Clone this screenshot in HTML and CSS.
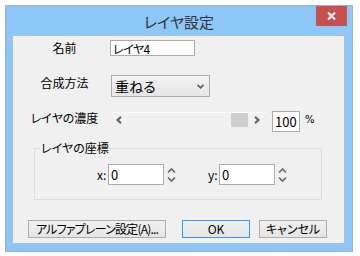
FILE: index.html
```html
<!DOCTYPE html>
<html lang="ja">
  <head>
    <meta charset="utf-8" />
    <title>レイヤ設定</title>
    <link rel="stylesheet" href="styles.css">
  </head>

  <body>
    <div class="window">
      <div class="titlebar">
        <span class="title">レイヤ設定</span>
        <button class="close_btn" title="閉じる">
          <svg width="9" height="8" viewBox="0 0 9 8"><path d="M1 0.5 L8 7.5 M8 0.5 L1 7.5" stroke="#fff" stroke-width="2"/></svg>
        </button>
      </div>

      <div class="client">
        <div class="row row_name">
          <span class="label">名前</span>
          <input class="textbox name_box" type="text" value="レイヤ4">
        </div>

        <div class="row row_blend">
          <span class="label">合成方法</span>
          <div class="combo">
            <span class="combo_text">重ねる</span>
            <svg class="combo_arrow" width="7" height="5" viewBox="0 0 7 5"><path d="M0.5 0.8 L3.5 3.8 L6.5 0.8" fill="none" stroke="#5a5a5a" stroke-width="1.6"/></svg>
          </div>
        </div>

        <div class="row row_opacity">
          <span class="label">レイヤの濃度</span>
          <div class="scroll">
            <svg class="scroll_arrow" width="6" height="8" viewBox="0 0 6 8"><path d="M5 0.8 L1.5 4 L5 7.2" fill="none" stroke="#606060" stroke-width="2"/></svg>
            <div class="scroll_track">
              <div class="scroll_thumb"></div>
            </div>
            <svg class="scroll_arrow" width="6" height="8" viewBox="0 0 6 8"><path d="M1 0.8 L4.5 4 L1 7.2" fill="none" stroke="#606060" stroke-width="2"/></svg>
          </div>
          <input class="textbox percent_box" type="text" value="100">
          <span class="percent">%</span>
        </div>

        <fieldset class="group">
          <legend>レイヤの座標</legend>
          <div class="coords">
            <span class="coord_label">x:</span>
            <input class="textbox coord_box" type="text" value="0">
            <svg class="spin" width="9" height="18" viewBox="0 0 9 18"><path d="M1 6.5 L4.5 3 L8 6.5 M1 11.5 L4.5 15 L8 11.5" fill="none" stroke="#6a6a6a" stroke-width="1.7"/></svg>

            <span class="coord_label coord_y">y:</span>
            <input class="textbox coord_box" type="text" value="0">
            <svg class="spin" width="9" height="18" viewBox="0 0 9 18"><path d="M1 6.5 L4.5 3 L8 6.5 M1 11.5 L4.5 15 L8 11.5" fill="none" stroke="#6a6a6a" stroke-width="1.7"/></svg>
          </div>
        </fieldset>

        <div class="btn_bar">
          <button class="btn alpha_btn">アルファプレーン設定(A)...</button>
          <button class="btn ok_btn">OK</button>
          <button class="btn cancel_btn">キャンセル</button>
        </div>
      </div>
    </div>
  </body>
</html>
```

FILE: styles.css
```css
html, body
{
  margin: 0;
  padding: 0;
  background-color: #fff;
  font-family: "Noto Sans CJK JP", sans-serif;
  font-size: 12px;
  font-feature-settings: "palt";
  color: #000;
}
.window
{
  margin: 5px 0 0 5px;
  width: 348px;
  height: 247px;
  box-sizing: border-box;
  border: 1px solid #9db3c8;
  background-color: #8dc7f8;
  display: flex;
  flex-direction: column;
}
.titlebar
{
  position: relative;
  height: 29px;
  display: flex;
  align-items: center;
  justify-content: center;
}
.title
{
  font-size: 15px;
  color: #333;
  line-height: 1;
  margin-top: 1px;
}
.close_btn
{
  position: absolute;
  top: 0;
  right: 5px;
  width: 31px;
  height: 20px;
  padding: 0;
  border: 0;
  background-color: #c75050;
  display: flex;
  align-items: center;
  justify-content: center;
}
.client
{
  margin: 0 7px 7px 6px;
  flex: 1;
  background-color: #f0f0f0;
  border: 1px solid #a9c0d6;
  display: flex;
  flex-direction: column;
}
.row
{
  display: flex;
  align-items: center;
}
.label
{
  width: 97px;
  padding-left: 6px;
  box-sizing: border-box;
  text-align: center;
  line-height: 1;
}
.textbox
{
  box-sizing: border-box;
  margin: 0;
  padding: 0 2px;
  border: 1px solid #ababab;
  background-color: #fff;
  font-family: inherit;
  font-feature-settings: "palt";
  color: #000;
  outline: none;
}
.row_name
{
  margin-top: 4px;
  height: 16px;
}
.name_box
{
  width: 85px;
  height: 16px;
  font-size: 12px;
  letter-spacing: -0.5px;
}
.row_blend
{
  margin-top: 19px;
  height: 22px;
}
.row_blend .label
{
  margin-top: -6px;
}
.combo
{
  margin-left: 1px;
  width: 99px;
  height: 22px;
  box-sizing: border-box;
  border: 1px solid #acacac;
  background: linear-gradient(#f2f2f2, #e5e5e5);
  display: flex;
  align-items: center;
  padding: 0 5px 0 3px;
}
.combo_text
{
  flex: 1;
  font-size: 14px;
  line-height: 1;
}
.row_opacity
{
  margin-top: 14px;
  height: 21px;
}
.row_opacity .label
{
  margin-top: -8px;
}
.scroll
{
  margin-left: 1px;
  width: 155px;
  height: 16px;
  margin-top: -4px;
  box-sizing: border-box;
  border-top: 1px solid #fff;
  display: flex;
  align-items: center;
  padding: 0 6px 0 5px;
}
.scroll_track
{
  flex: 1;
  height: 14px;
  display: flex;
  justify-content: flex-end;
  padding-right: 6px;
}
.scroll_thumb
{
  width: 17px;
  height: 14px;
  background-color: #cdcdcd;
}
.percent_box
{
  margin-left: 6px;
  width: 28px;
  height: 21px;
  font-size: 13px;
  padding: 0 0 0 2px;
}
.percent
{
  margin-left: 5px;
  margin-top: -4px;
  font-size: 10px;
  font-family: "DejaVu Sans", sans-serif;
}
.group
{
  margin: 8px 0 0 21px;
  padding: 0;
  width: 288px;
  box-sizing: border-box;
  border: 1px solid #dadada;
  min-width: 0;
}
.group legend
{
  margin-left: 5px;
  padding: 0 1px;
  line-height: 16px;
  font-size: 12px;
}
.coords
{
  display: flex;
  align-items: center;
  padding: 8px 0 14px 62px;
}
.coord_label
{
  width: 11px;
  line-height: 1;
}
.coord_y
{
  margin-left: 32px;
}
.coord_box
{
  width: 56px;
  height: 21px;
  font-size: 13px;
}
.spin
{
  margin-left: 3px;
}
.btn_bar
{
  margin: 20px 0 0 15px;
  display: flex;
}
.btn
{
  height: 18px;
  box-sizing: border-box;
  padding: 0;
  border: 1px solid #acacac;
  background: linear-gradient(#f0f0f0, #e5e5e5);
  font-family: inherit;
  font-size: 12px;
  font-feature-settings: "palt";
  line-height: 1;
  color: #000;
}
.alpha_btn
{
  width: 138px;
  letter-spacing: -0.8px;
}
.ok_btn
{
  margin-left: 16px;
  width: 68px;
  border-color: #3399ff;
}
.cancel_btn
{
  margin-left: 9px;
  width: 68px;
}
```
